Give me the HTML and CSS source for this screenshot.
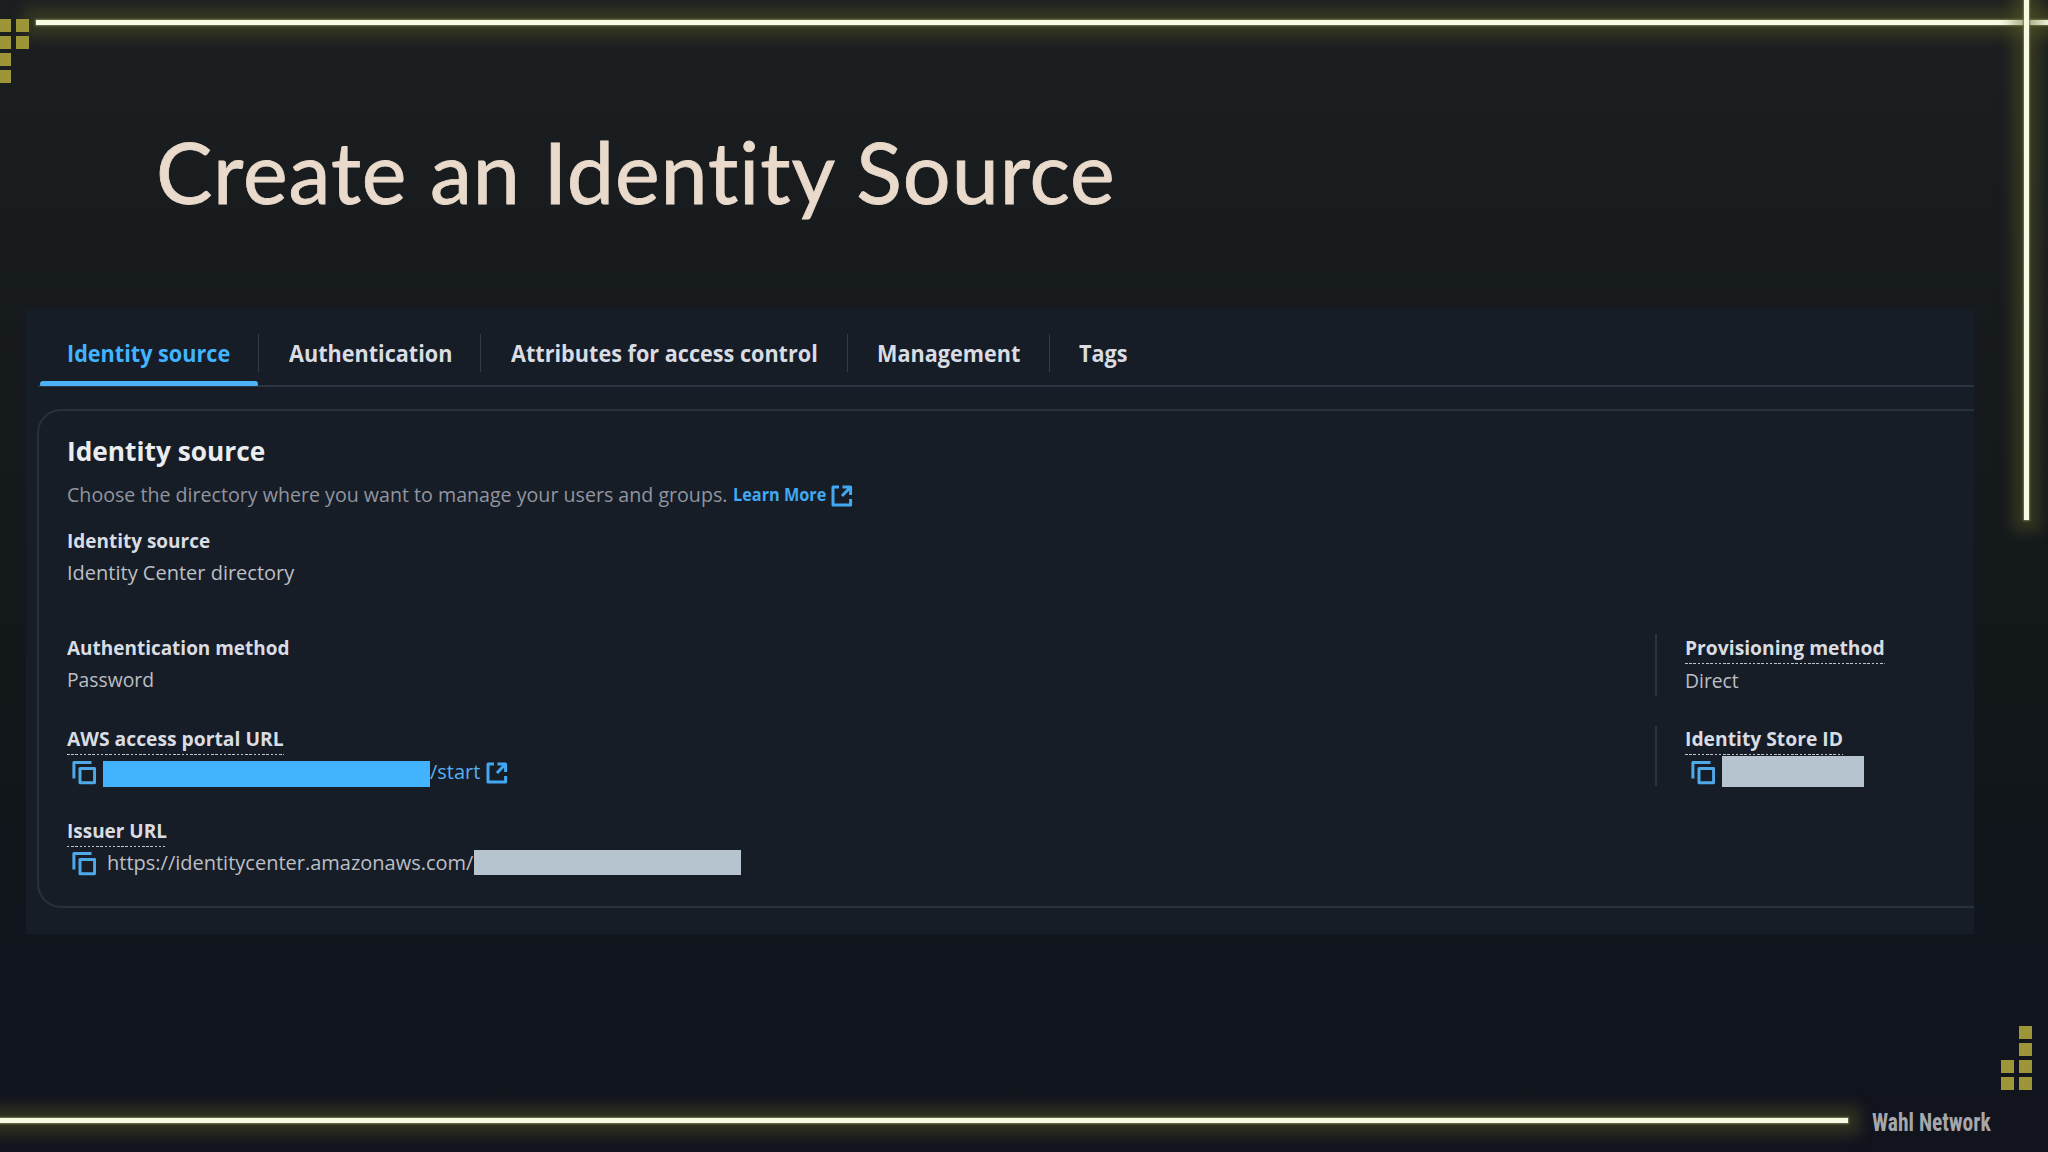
FILE: index.html
```html
<!DOCTYPE html>
<html lang="en">
<head>
<meta charset="utf-8">
<title>Create an Identity Source</title>
<link rel="stylesheet" href="styles.css">
</head>
<body>
<svg class="defs" aria-hidden="true">
  <symbol id="copy" viewBox="0 0 24 24">
    <path d="M1.9 17.5V1.5H19.5M8 7.5H22.6V21.7H8Z" fill="none" stroke="currentColor" stroke-width="3" stroke-linejoin="round"/>
  </symbol>
  <symbol id="external" viewBox="0 0 22 22">
    <path d="M8 2H2V20H19.6V14M11.5 2H19.6V10M19.6 2L11 11" fill="none" stroke="currentColor" stroke-width="3" stroke-linejoin="round"/>
  </symbol>
</svg>
<main class="slide">
  <h1 class="slide-title">Create an Identity Source</h1>
  <section class="console">
    <nav class="tabs">
      <a class="tab active"><span>Identity source</span></a>
      <a class="tab"><span>Authentication</span></a>
      <a class="tab"><span>Attributes for access control</span></a>
      <a class="tab"><span>Management</span></a>
      <a class="tab"><span>Tags</span></a>
    </nav>
    <div class="card">
      <h2 class="card-title">Identity source</h2>
      <p class="desc"><span class="desc-text">Choose the directory where you want to manage your users and groups.</span><a class="learn">Learn More</a><svg class="ext"><use href="#external"/></svg></p>
      <div class="row first">
        <div class="cell"><span class="label">Identity source</span><div class="value">Identity Center directory</div></div>
      </div>
      <div class="row methods">
        <div class="cell"><span class="label">Authentication method</span><div class="value narrow">Password</div></div>
        <div class="cell side"><span class="label hint wide">Provisioning method</span><div class="value narrow">Direct</div></div>
      </div>
      <div class="row">
        <div class="cell"><span class="label hint wide">AWS access portal URL</span>
          <div class="value link"><svg class="copy"><use href="#copy"/></svg><i class="mask mask-portal"></i><span>/start</span><svg class="ext"><use href="#external"/></svg></div></div>
        <div class="cell side short"><span class="label hint wide">Identity Store ID</span>
          <div class="value"><svg class="copy"><use href="#copy"/></svg><i class="mask mask-store"></i></div></div>
      </div>
      <div class="row last">
        <div class="cell"><span class="label hint">Issuer URL</span>
          <div class="value"><svg class="copy"><use href="#copy"/></svg><span class="issuer">https://identitycenter.amazonaws.com/</span><i class="mask mask-issuer"></i></div></div>
      </div>
    </div>
  </section>
  <div class="beam beam-top"></div>
  <div class="beam beam-right"></div>
  <div class="beam beam-bottom"></div>
  <div class="pixels pixels-top"><i></i><i></i><i></i><i></i><i></i><b></b><i></i></div>
  <div class="pixels pixels-bottom"><b></b><i></i><b></b><i></i><i></i><i></i><i></i><i></i></div>
  <div class="brand">Wahl Network</div>
</main>
</body>
</html>
```
FILE: styles.css
```css
* { box-sizing: border-box; margin: 0; padding: 0; }
body { background: #13171c; }
.defs { position: absolute; width: 0; height: 0; }

.slide {
  position: relative;
  width: 2048px;
  height: 1152px;
  overflow: hidden;
  background: linear-gradient(#1b1f20 0, #171b1e 260px, #12171a 700px, #11151d 950px, #11141d 100%);
  font-family: "Open Sans", "Noto Sans", sans-serif;
  color: #d9dce3;
}
.slide-title {
  height: 309px;
  padding: 122px 0 0 156px;
  font: 400 84.5px/100px Lato, sans-serif;
  letter-spacing: .9px;
  white-space: nowrap;
  color: #e9dacb;
  -webkit-text-stroke: .8px #e9dacb;
}

.console {
  width: 1948px;
  height: 625px;
  margin-left: 26px;
  background: #161d27;
}
.tabs {
  display: flex;
  height: 78px;
  margin-left: 12px;
  padding-top: 25px;
  border-bottom: 2px solid #2c343f;
}
.tab {
  position: relative;
  width: 222px;
  height: 38px;
  padding-left: 30px;
  border-right: 1px solid #343b47;
  font-size: 23px;
  line-height: 38px;
  font-weight: 700;
  white-space: nowrap;
}
.tab span { display: inline-block; transform: scaleX(.94); transform-origin: 0 0; }
.tab:nth-child(3) { width: 367px; }
.tab:nth-child(4) { width: 202px; padding-left: 29px; }
.tab:nth-child(5) { border: 0; padding-left: 29px; }
.tab.active { width: 221px; padding-left: 29px; color: #42b4ff; }
.tab.active::after {
  content: "";
  position: absolute;
  left: 2px;
  right: 0;
  top: 47px;
  height: 5px;
  border-radius: 3px 3px 1px 1px;
  background: #4cb2f5;
}

.card {
  height: 499px;
  margin: 22px 0 0 11px;
  padding: 22px 0 0 28px;
  border: 2px solid #28303a;
  border-right: 0;
  border-radius: 24px 0 0 24px;
}
.card-title {
  font-size: 27.5px;
  line-height: 36px;
  transform: scaleX(.955);
  transform-origin: 0 0;
  color: #ebecee;
}
.desc {
  display: flex;
  align-items: center;
  height: 30px;
  margin-top: 10px;
  color: #92959f;
  white-space: nowrap;
}
.desc-text { width: 666px; font-size: 20.5px; line-height: 30px; transform: scaleX(.957); transform-origin: 0 0; }
.learn { width: 98px; padding-top: 2px; font-size: 17px; line-height: 32px; font-weight: 700; transform: scaleX(.957); transform-origin: 0 0; color: #42a8f2; }
.desc .ext { margin-top: 4px; }

.row { display: grid; grid-template-columns: 1588px 1fr; height: 62px; margin-bottom: 30px; }
.row.first { height: 87px; margin: 19px 0; }
.methods .cell { padding-top: 1px; }
.side { padding-left: 28px; border-left: 2px solid #2c3440; }
.side.short { height: 60px; }
.label {
  display: inline-block;
  vertical-align: top;
  font-size: 20px;
  line-height: 26px;
  font-weight: 700;
  transform: scaleX(.948);
  transform-origin: 0 0;
}
.label.wide { transform: scaleX(.964); }
.hint {
  padding-bottom: 3px;
  background: repeating-linear-gradient(90deg, #c0c4cb 0 2.6px, transparent 2.6px 4.4px) 0 100% / 100% 1px no-repeat;
}
.value {
  display: flex;
  height: 26px;
  margin-top: 6px;
  font-size: 20px;
  line-height: 26px;
  white-space: nowrap;
  color: #bcbfc5;
}
.value.narrow { transform: scaleX(.965); transform-origin: 0 0; }
.hint + .value { margin-top: 4px; }
.last .hint + .value { margin-top: 3px; }
.link { color: #55b0f0; }
.copy { flex: none; width: 24px; height: 24px; margin: 2px 0 0 5px; color: #4fa9e8; }
.side .copy { margin-left: 6px; }
.ext { flex: none; width: 22px; height: 22px; color: #42a8f2; }
.link .ext { margin: 3px 0 0 5px; }
.link span { width: 51px; }
.mask { flex: none; background: #b5c4ce; }
.mask-portal { width: 327px; height: 26px; margin: 2px 0 0 7px; background: #42b4ff; }
.mask-store { width: 142px; height: 31px; margin: -3px 0 0 7px; }
.mask-issuer { width: 267px; height: 25px; }
.issuer { width: 367px; margin-left: 11px; }

/* Neon frame laid over the slide */
.beam { position: absolute; background: #f8fae2; box-shadow: 0 0 2px 1px #74774f, 0 0 14px 12px rgba(90, 91, 38, .42); }
.beam-top { left: 36px; right: -30px; top: 20px; height: 5px; }
.beam-right { left: 2024px; top: -30px; width: 5px; height: 550px; }
.beam-bottom { left: -30px; width: 1878px; top: 1118px; height: 5px; }

.pixels { position: absolute; display: grid; grid-template-columns: 13px 13px; grid-auto-rows: 13px; gap: 4px 5px; }
.pixels i { background: #9d9638; }
.pixels-top { left: -2px; top: 19px; }
.pixels-bottom { left: 2001px; top: 1026px; }
.brand {
  position: absolute;
  left: 1872px;
  top: 1105px;
  font: 700 26.5px/34px Roboto, sans-serif;
  font-stretch: 75%;
  transform: scaleX(.812);
  transform-origin: 0 0;
  white-space: nowrap;
  color: #a6a7aa;
}
```
